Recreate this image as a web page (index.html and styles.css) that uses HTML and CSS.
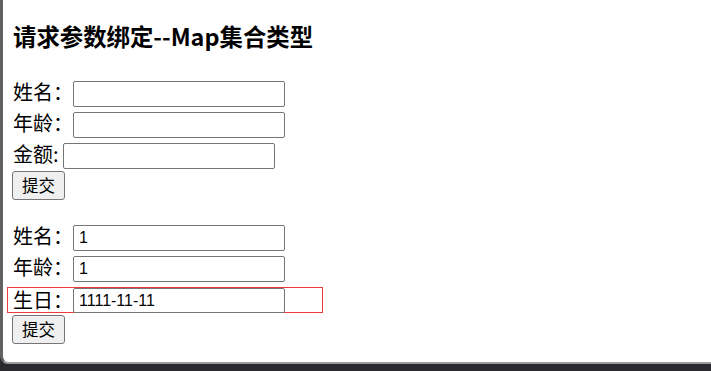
FILE: index.html
```html
<!DOCTYPE html>
<html lang="zh-CN">
<head>
  <meta charset="UTF-8">
  <title>请求参数绑定--Map集合类型</title>
  <link rel="stylesheet" href="styles.css">
</head>
<body>
  <div class="window">
    <h3 class="title">请求参数绑定--Map集合类型</h3>

    <!-- 第一个表单 -->
    <form class="param-form">
      <div class="row">姓名：<input type="text" class="field"></div>
      <div class="row">年龄：<input type="text" class="field"></div>
      <div class="row">金额: <input type="text" class="field field-short"></div>
      <button type="button" class="submit">提交</button>
    </form>

    <!-- 第二个表单 -->
    <form class="param-form">
      <div class="row">姓名：<input type="text" class="field" value="1"></div>
      <div class="row">年龄：<input type="text" class="field" value="1"></div>
      <div class="row row-marked">生日：<input type="text" class="field" value="1111-11-11"></div>
      <button type="button" class="submit">提交</button>
    </form>
  </div>
</body>
</html>
```

FILE: styles.css
```css
html, body {
  margin: 0;
  height: 100%;
  background-color: #2a2a2e;
}

.window {
  box-sizing: border-box;
  height: 364px;
  padding: 0 10px;
  background-color: #fff;
  border-left: 3px solid #626262;
  border-bottom: 2px solid #9b9b9b;
  border-bottom-left-radius: 8px;
  overflow: hidden;
  font-family: "Noto Sans CJK SC", "Noto Sans", sans-serif;
  font-size: 20px;
  color: #000;
}

.title {
  margin: 0;
  padding-top: 19px;
  height: 78px;
  box-sizing: border-box;
  font-size: 23.4px;
  line-height: 34px;
  font-weight: bold;
}

.param-form {
  margin: 0 0 22px 0;
}

.row {
  height: 31px;
  line-height: 28px;
  white-space: nowrap;
}

.field {
  box-sizing: border-box;
  width: 212px;
  height: 26px;
  margin-top: 3px;
  padding: 0 5px;
  vertical-align: top;
  border: 1px solid #767676;
  border-radius: 2px;
  font-family: "Liberation Sans", Arial, sans-serif;
  font-size: 16px;
  color: #000;
  background: #fff;
}

.row-marked {
  box-sizing: border-box;
  width: 316px;
  height: 26px;
  line-height: 24px;
  margin: 3px 0 2px -6px;
  padding-left: 5px;
  border: 1px solid #ea3b3b;
}

.row-marked .field {
  margin-top: 0;
  height: 25px;
}

.submit {
  display: block;
  box-sizing: border-box;
  height: 29px;
  padding: 0 9px;
  margin-left: -1px;
  border: 1px solid #767676;
  border-radius: 3px;
  background-color: #efefef;
  font-family: "Noto Sans CJK SC", sans-serif;
  font-size: 16.5px;
  line-height: 27px;
  color: #000;
}
```
